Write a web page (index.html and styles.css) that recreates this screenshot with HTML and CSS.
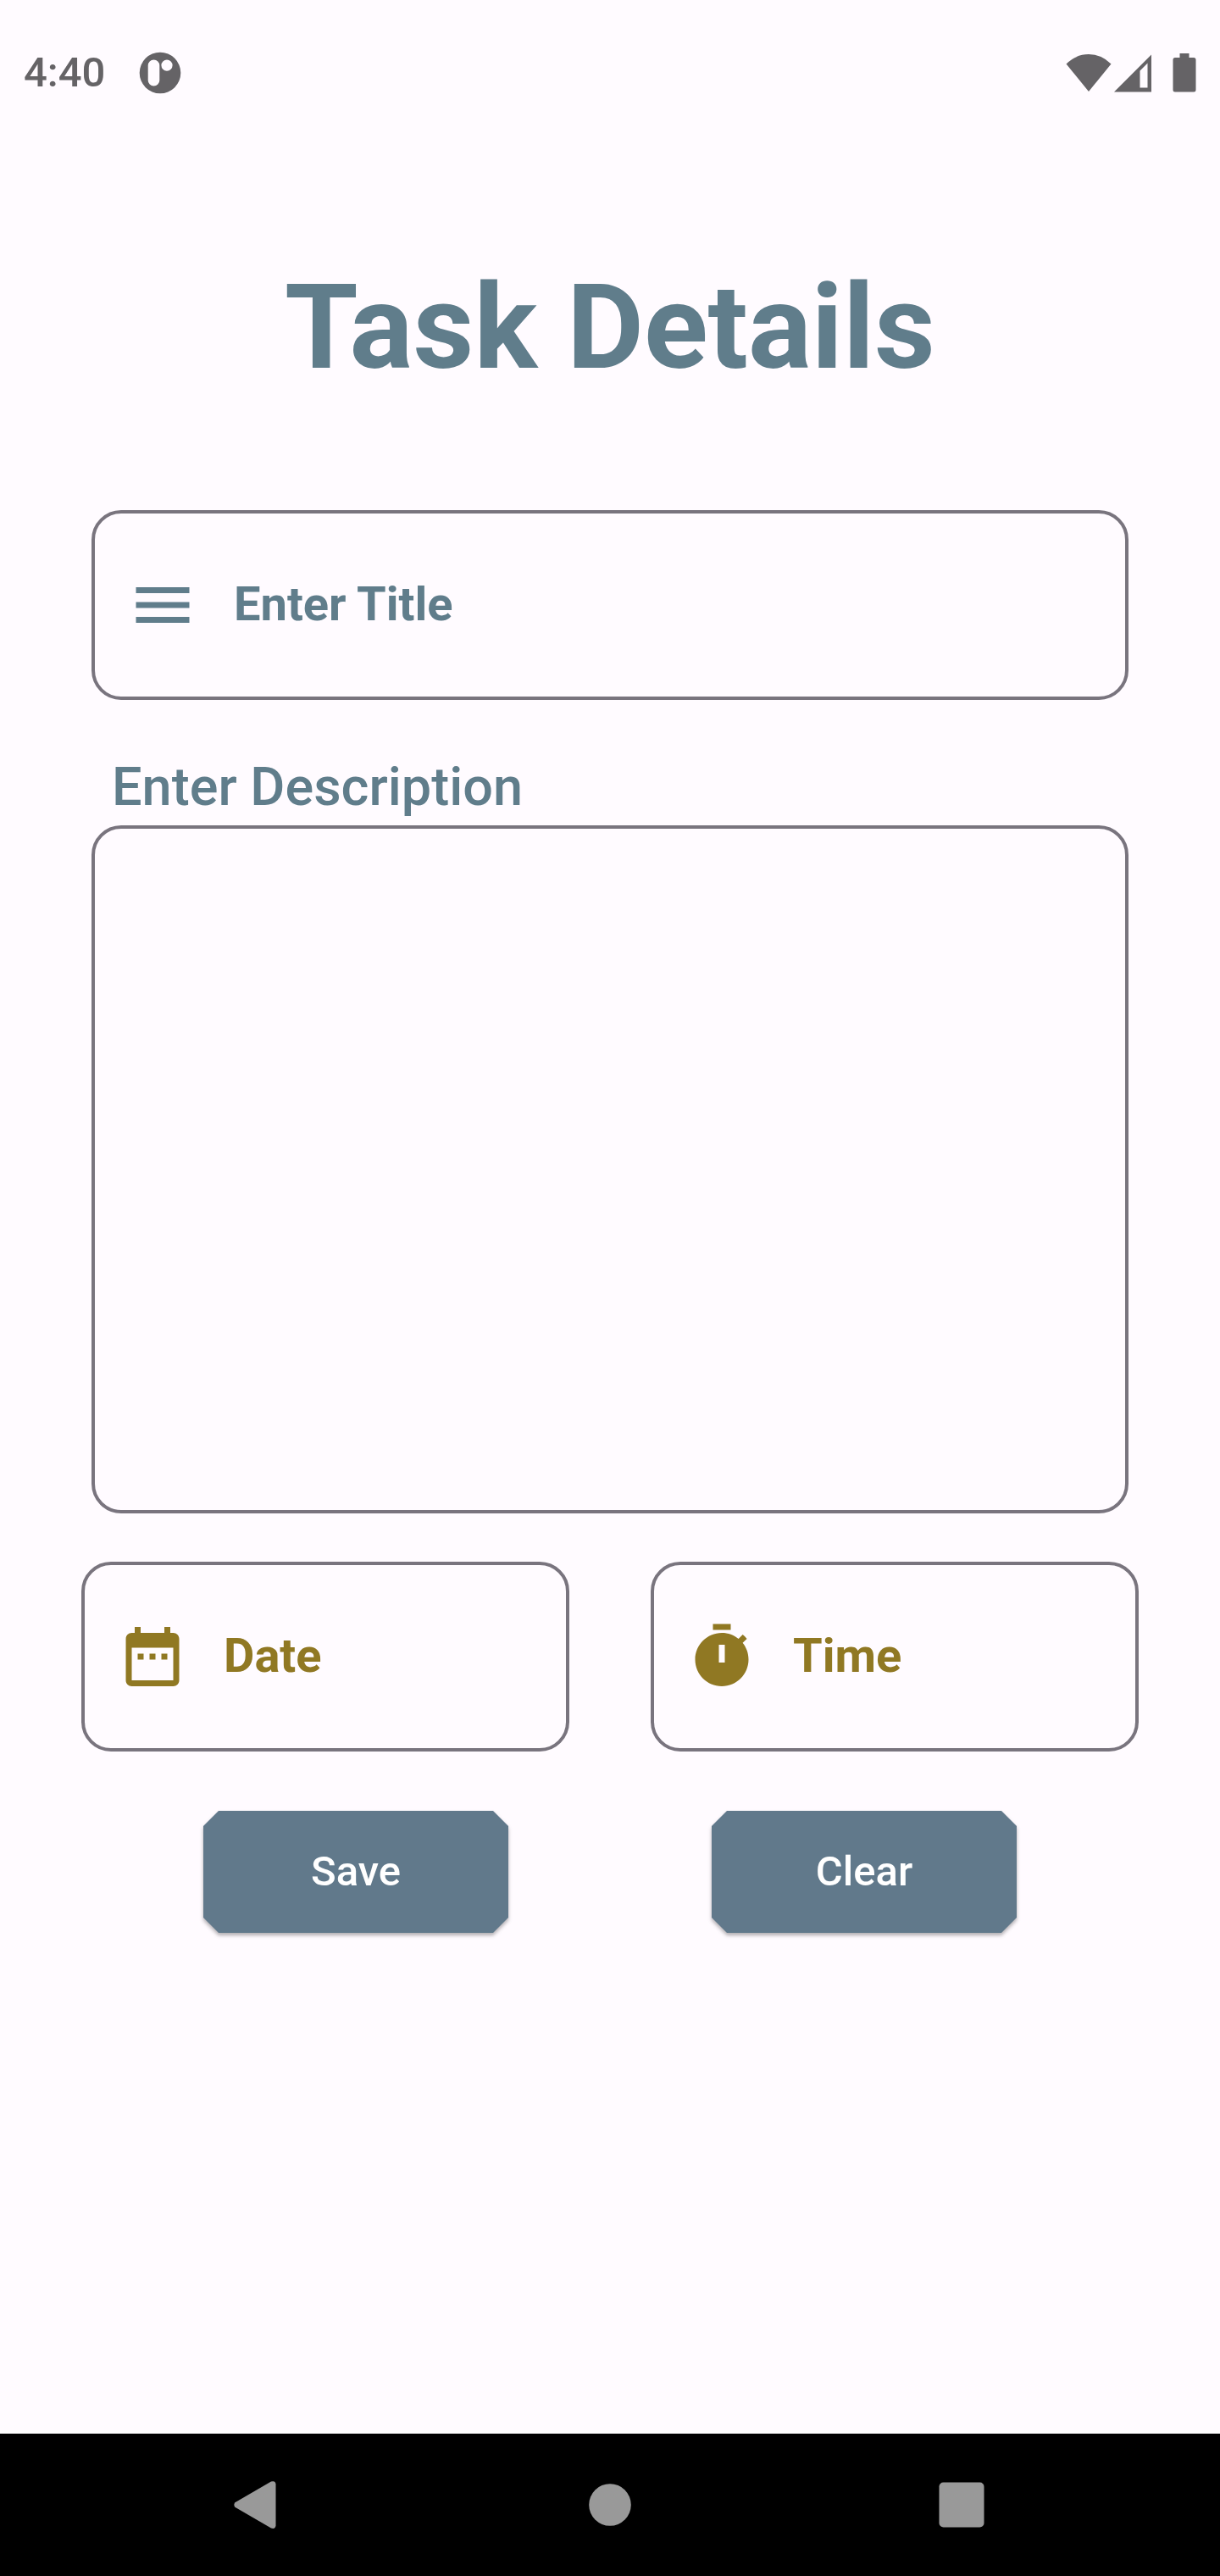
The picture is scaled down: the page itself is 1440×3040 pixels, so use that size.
FILE: index.html
```html
<!DOCTYPE html>
<html lang="en">
<head>
<meta charset="utf-8">
<meta name="viewport" content="width=device-width, initial-scale=1">
<title>Task Details</title>
<link rel="stylesheet" href="styles.css">
</head>
<body>
<div class="screen">
  <header class="status-bar">
    <div class="status-group">
      <time class="clock">4:40</time>
      <svg class="status-app" viewBox="0 0 50 50" aria-hidden="true"><path fill-rule="evenodd" d="M25 .7a24.3 24.3 0 1 0 0 48.6a24.3 24.3 0 0 0 0-48.6zM17.500 9.500a6.800 6.800 0 0 1 6.800 6.800v17.500a6.800 6.800 0 0 1-13.600 0V16.300a6.800 6.800 0 0 1 6.800-6.800zM33 9.500a6.600 6.600 0 1 1 0 13.200a6.600 6.600 0 0 1 0-13.200z"/></svg>
    </div>
    <div class="status-group status-icons">
      <svg class="status-wifi" viewBox="0 0 54 46" aria-hidden="true"><path d="M27 45L.500 12.500Q12 1 27 1T53.500 12.500z"/></svg>
      <svg class="status-signal" viewBox="0 0 46 46" aria-hidden="true"><path fill-rule="evenodd" d="M1 45.500L45 1.500V45.500zM31.500 20.500V40.500H40.500V11.500z"/></svg>
      <svg class="status-battery" viewBox="0 0 28 46" aria-hidden="true"><path d="M8.500 0H19.500V5H25a2.500 2.500 0 0 1 2.500 2.500V43a2.500 2.500 0 0 1-2.500 2.500H3A2.500 2.500 0 0 1 .500 43V7.500A2.500 2.500 0 0 1 3 5H8.500z"/></svg>
    </div>
  </header>

  <main class="content">
    <h1 class="title">Task Details</h1>
    <form class="task-form">
      <div class="field field-title">
        <svg class="field-icon" viewBox="0 0 24 24" aria-hidden="true"><path d="M3 18h18v-2H3v2zm0-5h18v-2H3v2zm0-7v2h18V6H3z"/></svg>
        <input class="field-input" type="text" placeholder="Enter Title" aria-label="Enter Title">
      </div>

      <div class="description">
        <label class="description-label" for="description">Enter Description</label>
        <textarea class="description-input" id="description"></textarea>
      </div>

      <div class="row">
        <div class="field field-accent">
          <svg class="field-icon" viewBox="0 0 24 24" aria-hidden="true"><path d="M9 11H7v2h2v-2zm4 0h-2v2h2v-2zm4 0h-2v2h2v-2zm2-7h-1V2h-2v2H8V2H6v2H5c-1.110 0-1.990.9-1.990 2L3 20c0 1.100.89 2 2 2h14c1.100 0 2-.9 2-2V6c0-1.100-.9-2-2-2zm0 16H5V9h14v11z"/></svg>
          <input class="field-input" type="text" placeholder="Date" aria-label="Date">
        </div>
        <div class="field field-accent">
          <svg class="field-icon" viewBox="0 0 24 24" aria-hidden="true"><path d="M9 1h6v2H9zM19.030 7.390l1.420-1.420c-.43-.51-.9-.99-1.410-1.410l-1.420 1.420C16.070 4.740 14.120 4 12 4c-4.970 0-9 4.030-9 9s4.020 9 9 9 9-4.030 9-9c0-2.120-.74-4.070-1.970-5.610zM13 14h-2V8h2v6z"/></svg>
          <input class="field-input" type="text" placeholder="Time" aria-label="Time">
        </div>
      </div>

      <div class="actions">
        <div class="button-shadow"><button class="button" type="submit">Save</button></div>
        <div class="button-shadow"><button class="button" type="reset">Clear</button></div>
      </div>
    </form>
  </main>

  <nav class="nav-bar">
    <button class="nav-button" type="button" aria-label="Back"><svg class="nav-icon" viewBox="0 0 60 60" aria-hidden="true"><path d="M2 27.500L45 2.500Q50 1 50.500 5.500V54.500Q50 59 45 57.500L2 32.500Q.500 30 2 27.500z"/></svg></button>
    <button class="nav-button" type="button" aria-label="Home"><svg class="nav-icon" viewBox="0 0 60 60" aria-hidden="true"><circle cx="30" cy="30" r="24.800"/></svg></button>
    <button class="nav-button" type="button" aria-label="Recent apps"><svg class="nav-icon" viewBox="0 0 60 60" aria-hidden="true"><rect x="3.500" y="3.500" width="53" height="53" rx="5"/></svg></button>
  </nav>
</div>
</body>
</html>
```
FILE: styles.css
```css
:root {
  --background: #fffbff;
  --primary: #607d8b;
  --button: #61798b;
  --accent: #907823;
  --outline: #79747e;
  --status: #656366;
}

* {
  box-sizing: border-box;
}

body {
  margin: 0;
  background: var(--background);
  color: var(--primary);
  font-family: Roboto, sans-serif;
}

.screen {
  display: flex;
  flex-direction: column;
  min-height: 100vh;
}

.status-bar {
  display: flex;
  justify-content: space-between;
  align-items: center;
  height: 172px;
  padding: 0 28px;
  color: var(--status);
  fill: currentColor;
}

.status-group {
  display: flex;
  align-items: center;
  gap: 40px;
}

.status-icons {
  gap: 2px;
}

.clock {
  font-size: 49px;
  font-weight: 500;
  line-height: 58px;
}

.status-app {
  width: 50px;
  height: 50px;
}

.status-wifi {
  width: 54px;
  height: 46px;
}

.status-signal {
  width: 46px;
  height: 46px;
}

.status-battery {
  width: 28px;
  height: 46px;
  margin-left: 22px;
}

.content {
  flex: 1;
  padding-top: 132px;
}

.title {
  margin: 0 0 134px;
  font-size: 140px;
  font-weight: 700;
  line-height: 164px;
  text-align: center;
}

.task-form {
  display: flex;
  flex-direction: column;
}

.field {
  display: flex;
  align-items: center;
  gap: 42px;
  height: 224px;
  padding: 0 38px;
  border: 4px solid var(--outline);
  border-radius: 35px;
}

.field-title {
  width: 85%;
  align-self: center;
}

.field-accent {
  width: 40%;
  color: var(--accent);
}

.field-icon {
  flex: none;
  width: 84px;
  height: 84px;
  fill: currentColor;
}

.field-input {
  flex: 1;
  min-width: 0;
  padding: 0 0 2px;
  border: 0;
  outline: 0;
  background: none;
  color: inherit;
  font-family: inherit;
  font-size: 56px;
  font-weight: 700;
  line-height: 66px;
}

.field-input::placeholder {
  color: inherit;
  opacity: 1;
}

.description {
  display: flex;
  flex-direction: column;
  gap: 8px;
  width: 85%;
  margin: 66px auto 57px;
}

.description-label {
  padding-left: 24px;
  font-size: 63px;
  font-weight: 500;
  line-height: 74px;
}

.description-input {
  height: 812px;
  padding: 40px;
  border: 4px solid var(--outline);
  border-radius: 35px;
  outline: 0;
  background: none;
  color: inherit;
  font-family: inherit;
  font-size: 56px;
  resize: none;
}

.row,
.actions {
  display: flex;
  justify-content: space-evenly;
}

.actions {
  margin-top: 70px;
}

.button-shadow {
  width: 25%;
  filter: drop-shadow(0 3px 2px rgba(0, 0, 0, 0.3));
}

.button {
  display: block;
  width: 100%;
  height: 144px;
  padding: 0;
  border: 0;
  background: var(--button);
  clip-path: polygon(18px 0, calc(100% - 18px) 0, 100% 18px, 100% calc(100% - 18px), calc(100% - 18px) 100%, 18px 100%, 0 calc(100% - 18px), 0 18px);
  color: #fff;
  font-family: inherit;
  font-size: 49px;
  font-weight: 500;
  line-height: 58px;
}

.nav-bar {
  display: grid;
  grid-template-columns: repeat(3, 1fr);
  height: 172px;
  padding: 0 98px;
  border-top: 4px solid #fefefe;
  background: #000;
}

.nav-button {
  display: flex;
  align-items: center;
  justify-content: center;
  padding: 0;
  border: 0;
  background: none;
}

.nav-icon {
  width: 60px;
  height: 60px;
  fill: #999;
}
```
